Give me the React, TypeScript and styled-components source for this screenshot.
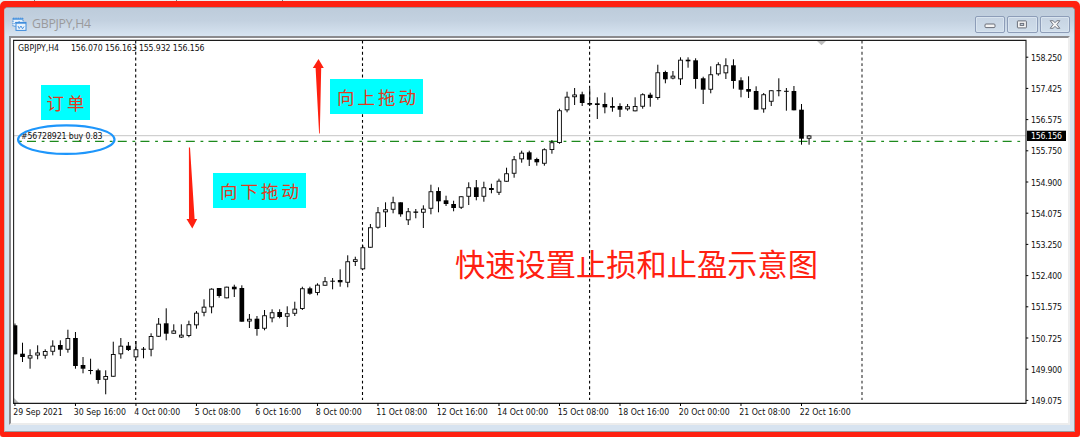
import React from 'react';
import styled, { createGlobalStyle } from 'styled-components';

const RED = '#ff2010';

const GlobalStyle = createGlobalStyle`
  * { box-sizing: border-box; }
  body { margin: 0; background: #eeeeee; overflow: hidden; }
`;

const Desktop = styled.main`
  width: 1080px;
  height: 437px;
  display: flex;
  flex-direction: column;
  overflow: hidden;
  background: #eeeeee;
`;

const DesktopEdge = styled.div`
  height: 1px;
  flex: none;
  display: flex;
  padding-left: 34px;
  gap: 141px;
`;

const EdgeTick = styled.i<{ $shift?: number }>`
  width: 1px;
  height: 1px;
  background: #777;
  margin-left: ${(p) => p.$shift ?? 0}px;
`;

const WindowFrame = styled.section`
  flex: 1;
  min-height: 0;
  border: solid ${RED};
  border-width: 6px 5px 5px 4px;
  border-radius: 5px 5px 3px 3px;
  background: ${RED};
`;

const WindowBody = styled.div`
  height: 425px;
  display: flex;
  flex-direction: column;
  border: 1px solid #9a9a9f;
  border-left-color: #c8b8bc;
  border-radius: 4px 4px 0 0;
  background: #d7e3f0;
`;

const TitleBar = styled.header`
  height: 28px;
  flex: none;
  display: flex;
  align-items: center;
  padding: 4px 4px 0 7px;
  border-radius: 3px 3px 0 0;
  background: linear-gradient(#bdccdb, #c3d1e0 45%, #d7e4f1);
`;

const Title = styled.h1`
  flex: 1;
  margin: 0 0 0 5px;
  font: 400 12.3px/16px 'Open Sans', 'Noto Sans', sans-serif;
  letter-spacing: -0.25px;
  color: #9a9a9c;
`;

const WindowButtons = styled.div`
  display: flex;
  gap: 2px;
`;

const WindowButton = styled.button`
  width: 30.5px;
  height: 17px;
  padding: 0;
  display: grid;
  place-items: center;
  border: 1px solid #8d9db8;
  border-radius: 2px;
  background: linear-gradient(#c6d3e2, #d0deeb);
  box-shadow: inset 0 0 0 1px #d9e4ef;
`;

const Client = styled.div`
  position: relative;
  flex: none;
  width: 1061px;
  height: 389px;
  margin-left: 4px;
  border: solid #8b8b8e;
  border-width: 2px 2px 2px 2px;
  border-right-color: #eeeeee;
  border-bottom-color: #ececec;
  background: #ffffff;
`;

const ChartSvg = styled.svg`
  display: block;
  overflow: hidden;
`;

const ChartText = styled.text`
  font-family: 'DejaVu Sans Condensed', 'DejaVu Sans', sans-serif;
  font-stretch: condensed;
  font-size: 8.7px;
  fill: #111111;
`;

const Callout = styled.div<{ $x: number; $y: number; $w: number }>`
  position: absolute;
  left: ${(p) => p.$x}px;
  top: ${(p) => p.$y}px;
  width: ${(p) => p.$w}px;
  height: 35px;
  padding-left: 3px;
  display: flex;
  align-items: center;
  justify-content: center;
  background: #00ffff;
  color: #e03a20;
  font: 400 17.5px/35px KaiTi, STKaiti, 'Noto Sans CJK SC', sans-serif;
  letter-spacing: 3px;
  white-space: nowrap;
`;

const Caption = styled.p`
  position: absolute;
  left: 444px;
  top: 205px;
  margin: 0;
  font: 400 30.25px/40px 'Noto Sans CJK SC', sans-serif;
  color: ${RED};
  white-space: nowrap;
`;

/* [high, body top, body bottom, low, filled] in chart pixels */
type Candle = [number, number, number, number, 0 | 1];

const CANDLES: Candle[] = [
  [323.5, 325.3, 354.3, 354.5, 1], [342.7, 353.7, 357, 362, 1], [349.3, 355.3, 358.5, 368.7, 0],
  [345.3, 352.5, 355.5, 359.3, 0], [349.3, 351, 355.7, 358.7, 0], [340.3, 345.7, 351.7, 355.3, 0],
  [340.3, 345, 349.7, 356, 1], [329.7, 338, 349.7, 352.7, 0], [332, 338, 366, 368.7, 1],
  [357, 365, 368.7, 373.3, 1], [358.7, 370, 371, 374.3, 1], [368.7, 370.3, 380, 383.7, 1],
  [370.3, 376, 379.7, 394.3, 0], [341.7, 354, 376.7, 376.7, 0], [338, 345.7, 354.3, 358.7, 0],
  [342, 345.7, 350, 351, 1], [341, 349.3, 357.3, 358, 0], [347, 348.7, 349.7, 358.3, 1],
  [333.3, 336, 349.7, 356.3, 0], [318, 323.7, 336.7, 337, 0], [308.3, 323.3, 333.7, 340.3, 1],
  [324.3, 330.5, 333.7, 333.7, 0], [324.3, 334.7, 337.5, 338, 0], [320.7, 324.3, 336, 337.3, 0],
  [311, 312.7, 325.3, 328.7, 0], [299.3, 306.7, 312.7, 316.3, 0], [288.3, 288.7, 307.3, 313.3, 0],
  [288, 288, 296, 297.7, 1], [286.7, 286.7, 298.3, 298.3, 0], [284.7, 286.7, 289.3, 297, 1],
  [285.3, 288, 321.7, 321.7, 1], [314, 318.8, 321.5, 328, 0], [316, 318.7, 329, 335.7, 1],
  [310, 315.3, 328.7, 330.3, 0], [309.3, 312.3, 318.3, 322.3, 0], [309.3, 312, 317, 318.3, 1],
  [306.3, 313.3, 316.7, 327, 0], [301.7, 308.7, 313.7, 316, 0], [286.7, 288.3, 309, 310, 0],
  [286.7, 288.3, 293.7, 294.7, 1], [283.3, 284.7, 293, 295.3, 0], [277, 281.3, 285.7, 285.7, 0],
  [278, 280.7, 281.7, 289.3, 1], [269.3, 280, 282.3, 286.7, 1], [255.3, 261.3, 282.7, 287.3, 0],
  [256.7, 259.3, 262, 266, 0], [245.3, 247.3, 269.3, 269.3, 0], [224, 227.3, 247.7, 247.7, 0],
  [207, 212.3, 227.7, 228.7, 0], [202.3, 209.3, 212.3, 227, 0], [196.7, 202.3, 209.7, 213.3, 0],
  [202.3, 202.3, 214.3, 216.7, 1], [208, 211.3, 220.3, 225, 0], [209, 211.5, 212.8, 218.3, 1],
  [205.3, 208.7, 212.7, 228, 0], [184.7, 191.3, 208.7, 214.3, 0], [187.3, 191, 201.3, 212.3, 1],
  [195.7, 200.3, 204, 206, 1], [200.7, 204, 208, 211.3, 1], [196.3, 196.3, 207.7, 209, 0],
  [182.3, 187.3, 196.7, 205, 0], [180, 187.3, 197, 200.3, 1], [181.7, 187.3, 196.7, 201.7, 0],
  [183.7, 188, 190, 193.3, 1], [178.7, 180.7, 192.7, 195, 0], [167.7, 173.3, 181.7, 181.7, 0],
  [156, 159.3, 173.7, 177.7, 0], [150.7, 152.7, 159.3, 162.7, 0], [150.7, 152.3, 159.7, 166, 1],
  [157.7, 159, 162.3, 165.7, 1], [148.3, 149.3, 163.7, 165.7, 0], [140, 142.3, 150, 153.7, 0],
  [108.7, 110.3, 143, 143.7, 0], [91.7, 96.7, 110.3, 112.3, 0], [88, 94.5, 97.2, 105, 0],
  [91.7, 94.3, 103, 106, 1], [88.7, 103, 104.7, 106, 1], [97.3, 103.3, 105, 119, 1],
  [92.7, 104, 107.3, 113.3, 1], [97.3, 106, 107.7, 111.7, 1], [103.3, 106, 109.7, 117, 1],
  [104, 106.3, 109.3, 110.7, 0], [97.3, 106, 111.3, 111.3, 0], [93.3, 94.3, 106.7, 108.7, 0],
  [92.7, 94.7, 98, 106.7, 1], [64.7, 72.3, 98, 99.7, 0], [70.7, 72, 79.3, 83.3, 1],
  [71, 75.7, 78.5, 79.3, 0], [57.3, 59.7, 79.3, 85, 0], [57.3, 59.7, 61.3, 67.7, 1],
  [58.3, 60.3, 79, 88.7, 1], [76.7, 78.3, 89.7, 104, 1], [66.3, 74.3, 89.7, 93.3, 0],
  [62.3, 64.3, 74.3, 75.7, 0], [58.3, 65.3, 73.3, 79, 0], [59.3, 65.3, 81, 88.7, 1],
  [77.3, 80.3, 89.7, 97.3, 1], [76.3, 89, 91.7, 98, 1], [86.3, 91, 109.7, 109.7, 1],
  [93, 94.3, 109.3, 112.7, 0], [90.3, 90.3, 101.7, 106, 0], [78.3, 90.2, 91.2, 96.3, 1],
  [88, 90.8, 91.8, 110.7, 1], [86, 91, 110.3, 110.3, 1], [104, 109.7, 138.7, 144.7, 1],
  [135, 135.5, 138.7, 144.7, 0],
];

const PRICES = [
  '158.250', '157.425', '156.575', '155.750', '154.900', '154.075',
  '153.250', '152.400', '151.575', '150.725', '149.900', '149.075',
];

const TIMES = [
  '29 Sep 2021', '30 Sep 16:00', '4 Oct 00:00', '5 Oct 08:00', '6 Oct 16:00', '8 Oct 00:00', '11 Oct 08:00',
  '12 Oct 16:00', '14 Oct 00:00', '15 Oct 08:00', '18 Oct 16:00', '20 Oct 00:00', '21 Oct 08:00', '22 Oct 16:00',
];

const STEP = 7.563;
const candleX = (i: number) => 14.95 + i * STEP;

const CandleMark = ({ index, candle }: { index: number; candle: Candle }) => {
  const [high, top, bottom, low, filled] = candle;
  const x = candleX(index);
  if (filled) {
    return (
      <g>
        <rect x={x - 0.5} y={high} width={1} height={low - high} fill="#000" />
        <rect x={x - 2.35} y={top} width={4.7} height={bottom - top} fill="#000" />
      </g>
    );
  }
  return (
    <g>
      <rect x={x - 0.5} y={high} width={1} height={low - high} fill="#000" />
      <rect x={x - 1.9} y={top + 0.45} width={3.8} height={Math.max(bottom - top - 0.9, 1.4)} fill="#fff" stroke="#000" strokeWidth={0.9} />
    </g>
  );
};

const Chart = () => (
  <ChartSvg width={1057} height={385} viewBox="11 38 1057 385">
    <clipPath id="plot"><rect x="13" y="40" width="1013" height="364" /></clipPath>
    <g clipPath="url(#plot)">
      <path d="M14 135.7H1026" stroke="#c6c6c6" />
      <path d="M14 141.4H1022" stroke="#1d8a1d" strokeWidth="1.1" strokeDasharray="9 5.7 2.8 5.19" strokeDashoffset="9.7" />
      {[135.7, 362.5, 589.6].map((x) => (
        <path key={x} d={`M${x} 40.5V400`} stroke="#000" strokeWidth="1.1" strokeDasharray="2.9 2.77" />
      ))}
      <path d="M862 40.5V400" stroke="#777" strokeWidth="1.7" strokeDasharray="2.9 2.77" />
      {CANDLES.map((c, i) => <CandleMark key={i} index={i} candle={c} />)}
      <path d="M817 41h9l-4.5 4.2Z" fill="#bdbdbd" />
      <path d="M14 398v5h5Z" fill="#b5b5b5" />
    </g>
    <path d="M13.6 403.4V40.4" fill="none" stroke="#222" strokeWidth="1.1" />
    <path d="M13 40.4H1026V403.4H13" fill="none" stroke="#1c1c1c" strokeWidth="1.1" />
    {PRICES.map((p, i) => {
      const y = 57.2 + i * 31.2;
      return (
        <g key={p}>
          <path d={`M1026 ${y}h2.3`} stroke="#000" />
          <ChartText x="1031" y={y + 3.5} textLength="31">{p}</ChartText>
        </g>
      );
    })}
    <rect x="1027" y="130.7" width="39" height="10.3" fill="#000" />
    <ChartText x="1031" y="139.2" textLength="31" style={{ fill: '#fff' }}>156.156</ChartText>
    {TIMES.map((t, i) => (
      <g key={t}>
        <path d={`M${candleX(i * 8)} 403v3`} stroke="#000" />
        <ChartText x={candleX(i * 8) - 1.7} y="415.2">{t}</ChartText>
      </g>
    ))}
    <ChartText x="18" y="51">GBPJPY,H4</ChartText>
    <ChartText x="71" y="51" textLength="133.5">156.070 156.163 155.932 156.156</ChartText>
    <ChartText x="21" y="139" textLength="81.5">#56728921 buy 0.83</ChartText>
    <ellipse cx="66.3" cy="139.6" rx="48.2" ry="14.3" fill="none" stroke="#1e96fb" strokeWidth="2.2" />
    <path d="M319.1 133.5L315.6 68H312.8L318.5 59L323.8 68H321.2L319.8 133.5Z" fill={RED} />
    <path d="M188.9 147.5H190L194.6 219H197.2L192.3 228.5L186.5 219H189Z" fill={RED} />
  </ChartSvg>
);

const ChartIcon = () => (
  <svg width="15" height="15" viewBox="0 0 15 15" fill="none" stroke="#3d8bdb">
    <rect x="1" y="1.2" width="10" height="8" fill="#eaf3fc" strokeDasharray="1.5 .8" />
    <path d="M1 2h10" strokeWidth="1.4" />
    <path d="M2.5 7l1.5-2 1.5 1.5 2-2.5" strokeWidth=".9" />
    <rect x="4" y="5.4" width="10" height="8" fill="#eaf3fc" />
    <path d="M4 6h10" strokeWidth="1.4" />
    <path d="M6 9l1.2 2.5L9 9l1.5 2.8L12 9.5" strokeWidth=".9" />
  </svg>
);

const App = () => (
  <>
    <GlobalStyle />
    <Desktop>
      <DesktopEdge>
        <EdgeTick />
        <EdgeTick />
        <EdgeTick $shift={-36} />
      </DesktopEdge>
      <WindowFrame>
        <WindowBody>
          <TitleBar>
            <ChartIcon />
            <Title>GBPJPY,H4</Title>
            <WindowButtons>
              <WindowButton aria-label="Minimize">
                <svg width="12" height="9" viewBox="0 0 12 9">
                  <rect x="1" y="4" width="10" height="3.6" rx="1" fill="#f4f4f4" stroke="#6a6e78" />
                </svg>
              </WindowButton>
              <WindowButton aria-label="Maximize">
                <svg width="12" height="9" viewBox="0 0 12 9">
                  <rect x="1.4" y=".9" width="9" height="7" rx=".6" fill="#f4f4f4" stroke="#6a6e78" />
                  <rect x="4.2" y="3.4" width="3.5" height="2" fill="#c6d3e2" stroke="#6a6e78" />
                </svg>
              </WindowButton>
              <WindowButton aria-label="Close">
                <svg width="12" height="9" viewBox="0 0 12 9">
                  <path d="M1.2.7H4L6 2.6 8 .7h2.8L7.9 4.5l2.9 3.8H8L6 6.4 4 8.3H1.2L4.1 4.5Z" fill="#f4f4f4" stroke="#6a6e78" strokeWidth=".9" />
                </svg>
              </WindowButton>
            </WindowButtons>
          </TitleBar>
          <Client>
            <Chart />
            <Callout $x={30} $y={47} $w={49}>订单</Callout>
            <Callout $x={319} $y={41} $w={93}>向上拖动</Callout>
            <Callout $x={202} $y={135} $w={93}>向下拖动</Callout>
            <Caption>快速设置止损和止盈示意图</Caption>
          </Client>
        </WindowBody>
      </WindowFrame>
    </Desktop>
  </>
);

export default App;
